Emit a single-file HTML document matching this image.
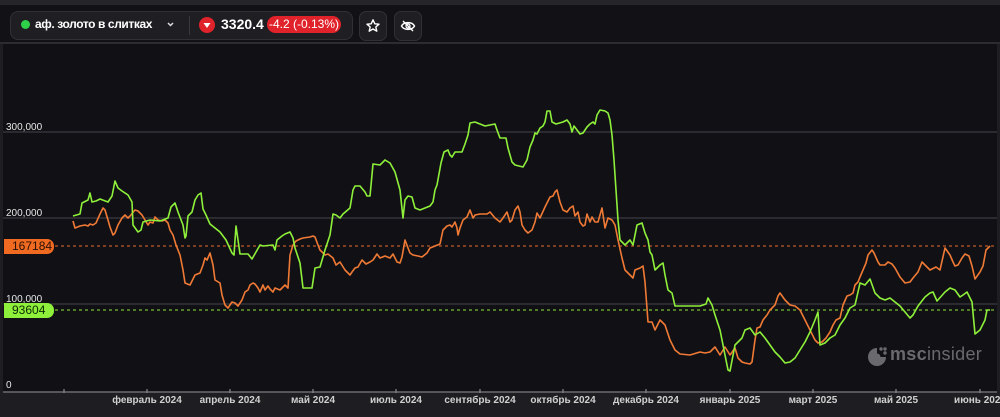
<!DOCTYPE html>
<html><head><meta charset="utf-8"><style>
*{margin:0;padding:0;box-sizing:border-box}
body{width:1000px;height:417px;background:#1e1e22;overflow:hidden;font-family:"Liberation Sans",sans-serif;position:relative}
.top{position:absolute;left:0;top:0;width:1000px;height:44px;background:#121216;border-top:5px solid #26262a;border-bottom:2px solid #2c2c31}
.pill{position:absolute;left:10px;top:11px;width:343px;height:29px;background:#1f1f23;border:1px solid #303035;border-radius:8px}
.btn{position:absolute;top:11px;width:28px;height:30px;background:#1f1f23;border:1px solid #303035;border-radius:7px}
.chart{position:absolute;left:3px;top:44px;width:994px;height:348px;background:#111115}
.t{position:absolute;color:#fff;font-weight:bold;white-space:nowrap}
.yl{position:absolute;left:6px;font-size:10px;color:#e6e6e6}
.xl{position:absolute;top:395px;font-size:10px;font-weight:bold;color:#d0d0d0;transform:translateX(-50%);white-space:nowrap}
</style></head><body>
<div class="top"></div>
<div class="pill"></div>
<div style="position:absolute;left:21px;top:20px;width:9px;height:9px;border-radius:50%;background:#2ed04a"></div>
<div class="t" style="left:35px;top:17px;font-size:12px;letter-spacing:-0.4px">аф. золото в слитках</div>
<svg style="position:absolute;left:166px;top:20px" width="9" height="9"><path d="M2 3 L4.5 5.5 L7 3" stroke="#ddd" stroke-width="1.5" fill="none"/></svg>
<div style="position:absolute;left:189px;top:16px;width:1px;height:19px;background:#38383d"></div>
<div style="position:absolute;left:199px;top:17px;width:16px;height:16px;border-radius:50%;background:#e0222a"></div>
<svg style="position:absolute;left:199px;top:17px" width="16" height="16"><path d="M4.5 6 L11.5 6 L8 11 Z" fill="#fff"/></svg>
<div class="t" style="left:221px;top:16px;font-size:14px">3320.4</div>
<div style="position:absolute;left:267px;top:16px;width:74px;height:17px;border-radius:9px;background:#e0222a;color:#fff;font-size:12px;text-align:center;line-height:17px">-4.2 (-0.13%)</div>
<div class="btn" style="left:359px"></div>
<svg style="position:absolute;left:365px;top:18px" width="16" height="16"><path d="M8 1.8 L9.8 5.8 L14 6.2 L10.8 9 L11.8 13.2 L8 11 L4.2 13.2 L5.2 9 L2 6.2 L6.2 5.8 Z" fill="none" stroke="#fff" stroke-width="1.4" stroke-linejoin="round"/></svg>
<div class="btn" style="left:394px"></div>
<svg style="position:absolute;left:400px;top:18px" width="16" height="16"><path d="M1.5 8 C4 3.5 12 3.5 14.5 8 C12 12.5 4 12.5 1.5 8 Z" fill="none" stroke="#fff" stroke-width="1.4"/><circle cx="8" cy="8" r="2" fill="none" stroke="#fff" stroke-width="1.3"/><path d="M3 3 L13 13" stroke="#fff" stroke-width="1.4"/></svg>
<div class="chart"></div>
<svg style="position:absolute;left:0;top:0" width="1000" height="417">
<g stroke="#3a3a40" stroke-width="1.2">
<line x1="3" y1="132" x2="997" y2="132"/><line x1="3" y1="218" x2="997" y2="218"/><line x1="3" y1="304" x2="997" y2="304"/>
</g>
<line x1="3" y1="392" x2="997" y2="392" stroke="#6a6a70" stroke-width="1.5"/>
<g stroke="#8a8a90" stroke-width="1.2">
<line x1="64" y1="389" x2="64" y2="393"/><line x1="147" y1="389" x2="147" y2="393"/><line x1="230" y1="389" x2="230" y2="393"/><line x1="313" y1="389" x2="313" y2="393"/><line x1="396" y1="389" x2="396" y2="393"/><line x1="480" y1="389" x2="480" y2="393"/><line x1="563" y1="389" x2="563" y2="393"/><line x1="646" y1="389" x2="646" y2="393"/><line x1="730" y1="389" x2="730" y2="393"/><line x1="813" y1="389" x2="813" y2="393"/><line x1="896" y1="389" x2="896" y2="393"/><line x1="980" y1="389" x2="980" y2="393"/>
</g>
<line x1="55" y1="246" x2="997" y2="246" stroke="#e8692a" stroke-width="1" stroke-dasharray="3,3"/>
<line x1="55" y1="310" x2="997" y2="310" stroke="#8ee83a" stroke-width="1" stroke-dasharray="3,3"/>
<polyline fill="none" stroke="#f07a35" stroke-width="1.6" stroke-linejoin="round" points="73,221 75,228 80,226 85,225 88,226 90,224 93,225 96,223 100,214 103,208 105,210 108,220 110,227 113,235 115,233 118,225 122,218 125,215 128,218 130,216 135,210 138,211 142,215 145,220 148,225 150,222 153,223 155,217 158,220 162,221 165,220 168,223 170,230 173,235 176,245 180,255 183,270 185,283 190,285 195,275 200,273 203,265 205,258 207,260 210,253 213,265 215,280 220,283 222,295 225,305 228,308 232,302 235,303 238,306 242,300 245,292 248,290 250,285 253,283 255,284 258,288 260,292 263,285 265,290 268,286 270,289 273,292 275,288 280,290 285,285 288,288 290,255 293,245 296,241 300,239 303,238 310,237 313,236 315,237 318,245 320,250 325,255 328,254 333,258 336,265 340,262 345,270 350,275 352,272 355,268 358,267 362,260 366,264 370,262 373,260 377,254 380,258 385,256 390,258 393,254 397,262 400,263 402,257 405,240 408,248 410,253 413,255 418,256 422,257 427,253 430,248 435,246 440,244 443,230 447,226 450,225 452,227 455,222 457,228 458,235 460,228 463,220 467,217 470,210 473,218 475,215 480,214 487,214 490,212 495,218 500,222 503,218 507,212 510,222 512,220 515,210 518,206 520,212 522,225 525,230 528,233 532,230 535,222 537,213 540,218 545,207 548,201 550,197 553,196 555,192 557,190 560,202 563,210 567,212 570,208 573,206 575,216 578,212 580,222 583,226 585,225 587,214 590,222 592,217 595,222 598,222 600,215 602,208 605,228 608,218 612,220 615,225 618,240 622,258 625,270 630,275 633,278 635,270 640,268 643,266 645,282 648,322 652,322 655,330 660,320 665,325 670,340 675,350 680,354 690,355 700,352 705,353 710,352 715,347 720,355 725,347 730,355 735,348 738,358 742,362 745,363 750,364 752,362 755,340 757,328 760,327 763,320 767,315 770,310 775,305 778,296 780,293 785,300 790,305 795,306 800,310 805,320 810,330 815,340 818,343 822,342 826,338 830,332 833,325 836,320 840,318 843,305 847,296 850,295 853,293 855,285 858,282 860,277 863,270 866,263 868,255 872,250 874,253 878,262 880,265 885,265 888,262 892,264 895,268 900,277 905,283 910,282 913,278 918,272 922,262 925,265 930,270 936,267 940,270 945,248 950,255 953,262 955,266 958,265 962,258 965,254 969,256 972,266 975,279 980,272 983,266 986,250 990,246"/>
<polyline fill="none" stroke="#8ef03a" stroke-width="1.6" stroke-linejoin="round" points="73,216 80,214 82,203 88,200 90,193 92,202 96,201 100,199 108,202 112,196 115,181 118,188 122,191 128,195 132,202 133,225 138,232 141,230 143,222 150,220 160,221 168,218 171,207 175,203 178,212 183,225 185,238 186,236 188,216 192,212 195,200 198,195 201,193 203,209 206,215 210,224 220,232 226,240 232,253 234,255 236,226 238,240 240,254 248,254 252,259 256,252 260,245 263,246 273,245 275,250 277,240 282,236 285,234 290,232 293,238 295,248 300,263 303,288 312,288 315,268 320,267 325,250 330,235 333,214 336,215 340,218 343,214 350,208 353,190 355,186 360,186 365,192 367,196 370,196 373,164 380,165 385,160 390,163 395,172 400,190 403,218 405,200 408,196 412,197 415,208 420,210 425,208 430,206 433,202 435,190 437,185 441,163 444,152 448,150 450,155 452,157 455,152 462,152 465,144 468,135 470,123 475,122 480,124 485,126 495,124 497,130 500,138 506,138 508,148 512,162 515,165 523,167 527,160 530,147 533,140 535,133 537,134 540,128 543,126 545,122 547,111 550,111 552,122 556,124 563,122 567,120 570,124 572,132 574,126 577,130 580,134 583,133 587,127 590,124 593,122 595,124 597,115 600,110 605,111 608,113 610,120 612,135 614,160 616,190 618,220 620,240 625,245 630,240 633,245 637,225 642,223 645,233 648,240 650,252 652,255 655,270 660,265 663,263 665,275 668,290 672,293 675,306 700,306 706,304 708,298 712,305 715,315 720,330 725,355 728,370 730,371 735,345 738,342 742,338 745,330 750,328 755,335 760,332 765,338 770,345 775,352 780,357 785,363 790,362 795,358 800,350 805,342 810,332 815,320 818,312 820,345 825,343 830,338 835,335 840,325 845,318 850,308 855,305 858,292 860,283 865,285 870,279 875,293 880,298 885,300 890,298 895,302 900,306 905,312 910,318 913,315 918,306 925,297 930,293 933,292 937,301 945,292 950,288 955,290 960,297 963,295 967,292 972,302 975,334 980,330 985,320 987,310 990,310"/>
</svg>
<div class="yl" style="top:122px">300,000</div>
<div class="yl" style="top:208px">200,000</div>
<div class="yl" style="top:294px">100,000</div>
<div class="yl" style="top:380px">0</div>
<div style="position:absolute;left:4px;top:239px;width:50px;height:15px;background:#f06a22;border-radius:0 7px 7px 0;color:#2a1206;font-size:12px;line-height:15px;padding-left:8px">167184</div>
<div style="position:absolute;left:4px;top:303px;width:50px;height:15px;background:#8ef03a;border-radius:0 7px 7px 0;color:#0e2a06;font-size:12px;line-height:15px;padding-left:8px">93604</div>
<svg style="position:absolute;left:866px;top:346px" width="22" height="22"><path d="M11 2 A9 9 0 1 0 20 11 L14 11 A3 3 0 1 1 11 8 Z" fill="#6a6a6e"/><circle cx="11" cy="11" r="3.5" fill="#6a6a6e"/><circle cx="15" cy="3" r="1.7" fill="#6a6a6e"/><circle cx="19" cy="7" r="1.7" fill="#6a6a6e"/><circle cx="19" cy="3" r="1.7" fill="#6a6a6e"/></svg>
<div style="position:absolute;left:890px;top:344px;font-size:18px;color:#6a6a6e;letter-spacing:0.3px"><b>msc</b>insider</div>
<div class="xl" style="left:147px">февраль 2024</div>
<div class="xl" style="left:230px">апрель 2024</div>
<div class="xl" style="left:313px">май 2024</div>
<div class="xl" style="left:396px">июль 2024</div>
<div class="xl" style="left:480px">сентябрь 2024</div>
<div class="xl" style="left:563px">октябрь 2024</div>
<div class="xl" style="left:646px">декабрь 2024</div>
<div class="xl" style="left:730px">январь 2025</div>
<div class="xl" style="left:813px">март 2025</div>
<div class="xl" style="left:896px">май 2025</div>
<div class="xl" style="left:980px">июнь 2025</div>
</body></html>
